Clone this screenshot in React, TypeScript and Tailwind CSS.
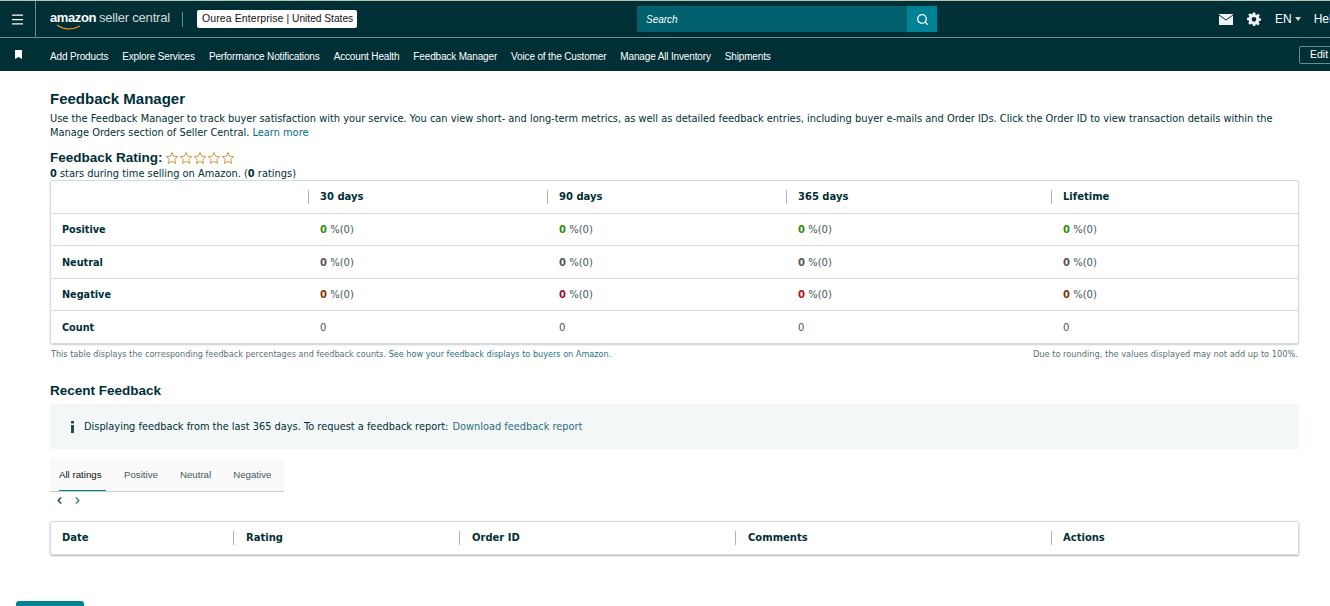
import { ChevronLeft, ChevronRight, Menu, Search } from "lucide-react"

const navLinks = [
  "Add Products",
  "Explore Services",
  "Performance Notifications",
  "Account Health",
  "Feedback Manager",
  "Voice of the Customer",
  "Manage All Inventory",
  "Shipments",
]

const rows = [
  { label: "Positive", h: "h-[32px]", colors: ["text-[#2f8f0f]", "text-[#2f8f0f]", "text-[#2f8f0f]", "text-[#2f8f0f]"] },
  { label: "Neutral", h: "h-[33px]", colors: ["text-[#555555]", "text-[#555555]", "text-[#555555]", "text-[#555555]"] },
  { label: "Negative", h: "h-[32px]", colors: ["text-[#7a3b0c]", "text-[#a01030]", "text-[#b01010]", "text-[#7a3b0c]"] },
]

const ratingCols = "grid grid-cols-[257px_239px_239px_265px_1fr]"
const recentCols = "grid grid-cols-[182px_226px_276px_316px_1fr]"

function Star() {
  return (
    <svg width="14" height="14" viewBox="0 0 24 24" fill="none" stroke="#c9973f" strokeWidth="1.7">
      <path d="M12 2.5l2.9 6.4 6.9.8-5.1 4.7 1.4 6.9-6.1-3.5-6.1 3.5 1.4-6.9-5.1-4.7 6.9-.8z" />
    </svg>
  )
}

function Head({ label, pad = "pl-[11px]" }: { label: string; pad?: string }) {
  return (
    <div className={`border-l border-[#aab7b8] ${pad} text-[10px] leading-[14px] font-bold text-[#002f36]`}>
      {label}
    </div>
  )
}

export default function App() {
  return (
    <div className="h-[606px] w-[1330px] overflow-hidden bg-white font-['DejaVu_Sans',sans-serif] text-[#002f36]">
      <header className="bg-[#002f36] font-['Liberation_Sans',sans-serif] text-white">
        <div className="flex h-[38px] items-center border-t border-b border-t-[#b5c4b0] border-b-[#6d8a8c]">
          <div className="flex h-full w-[36px] shrink-0 items-center justify-center border-r border-[#6d8a8c]">
            <Menu size={15} strokeWidth={2} />
          </div>
          <div className="relative ml-[14px] flex h-full w-[119px] shrink-0 items-center pb-[2px] text-[13px] whitespace-nowrap">
            <span className="font-bold tracking-[-0.4px]">amazon</span>
            <span className="ml-[3px] font-normal tracking-[-0.2px] text-[#d5dbdb]">seller central</span>
            <svg className="absolute top-[23px] left-[6px]" width="26" height="7" viewBox="0 0 26 7" fill="none">
              <path d="M1 1c7 5 16 5 23 1" stroke="#e88b1a" strokeWidth="1.4" />
            </svg>
          </div>
          <div className="ml-[13px] h-[15px] w-px shrink-0 bg-[#6d8a8c]" />
          <div className="ml-[14px] flex h-[18px] w-[160px] shrink-0 items-center rounded-[2px] bg-white px-[5px] text-[10.5px] whitespace-nowrap text-[#0f1111]">
            <span className="tracking-[0.1px]">Ourea Enterprise</span>
            <span className="ml-[3px] text-[10.2px]">| United States</span>
          </div>
          <div className="ml-[280px] flex h-[26px] w-[300px] shrink-0">
            <div className="flex flex-1 items-center bg-[#00606e] pl-[9px] text-[10px] italic">Search</div>
            <div className="flex w-[30px] items-center justify-center bg-[#008296]">
              <Search size={13} strokeWidth={2.4} />
            </div>
          </div>
          <div className="ml-[282px] flex shrink-0 items-center">
            <svg width="14" height="11" viewBox="0 0 14 11">
              <path d="M0 0h14v11H0z" fill="#eef2f2" />
              <path d="M0 1l7 5 7-5" fill="none" stroke="#002f36" strokeWidth="1" />
            </svg>
            <svg className="ml-[14px]" width="14" height="14" viewBox="0 0 24 24" fill="#eef2f2">
              <path fillRule="evenodd" d="M10 1h4l.6 3.2 1.9.8 2.7-1.8 2.8 2.8-1.8 2.7.8 1.9L24 11v4l-3.2.6-.8 1.9 1.8 2.7-2.8 2.8-2.7-1.8-1.9.8L14 24h-4l-.6-3.2-1.9-.8-2.7 1.8L2 19l1.8-2.7-.8-1.9L0 13.8V10l3.2-.6.8-1.9L2.2 4.8 5 2l2.7 1.8 1.9-.8zM12 8.5a4 4 0 100 8 4 4 0 000-8z" />
            </svg>
            <span className="ml-[14px] text-[12px]">EN</span>
            <span className="ml-[3px] h-0 w-0 border-x-[3.5px] border-t-[4px] border-x-transparent border-t-[#d5dbdb]" />
            <span className="ml-[13px] text-[12px]">Help</span>
          </div>
        </div>
        <div className="flex h-[33px] items-center">
          <div className="flex w-[36px] shrink-0 justify-center">
            <svg width="7" height="9" viewBox="0 0 7 9" fill="#ffffff">
              <path d="M0 0h7v9L3.5 7 0 9z" />
            </svg>
          </div>
          <nav className="mt-[3px] ml-[14px] flex shrink-0 gap-[14px] text-[10px] tracking-[-0.15px] whitespace-nowrap">
            {navLinks.map((link) => (
              <a key={link}>{link}</a>
            ))}
          </nav>
          <div className="mr-[-29px] ml-auto flex h-[18px] w-[60px] shrink-0 items-center rounded-[2px] border border-[#6d8a8c] pl-[10px] text-[10.5px]">
            Edit
          </div>
        </div>
      </header>

      <main className="pr-[31px] pl-[50px]">
        <h1 className="mt-[19px] font-['Liberation_Sans',sans-serif] text-[15px] leading-[17px] font-bold">Feedback Manager</h1>
        <p className="mt-[5px] text-[9.83px] leading-[14px]">
          Use the Feedback Manager to track buyer satisfaction with your service. You can view short- and long-term metrics, as well as detailed feedback entries, including buyer e-mails and Order IDs. Click the Order ID to view transaction details within the Manage Orders section of Seller Central.{" "}
          <a className="text-[#007185]">Learn more</a>
        </p>

        <div className="mt-[10px] flex h-[16px] items-center">
          <h2 className="font-['Liberation_Sans',sans-serif] text-[13.5px] font-bold">Feedback Rating:</h2>
          <div className="ml-[2px] flex">
            {[0, 1, 2, 3, 4].map((n) => (
              <Star key={n} />
            ))}
          </div>
        </div>
        <p className="mt-px mb-[-1px] text-[9.85px] leading-[14px]">
          <b>0</b> stars during time selling on Amazon. (<b>0</b> ratings)
        </p>

        <section className="w-[1249px] rounded-[2px] border border-[#d5dbdb] shadow-[0_1px_2px_rgba(0,0,0,0.2)]">
          <div className={`${ratingCols} h-[33px] items-center border-b border-[#d5dbdb]`}>
            <div />
            {["30 days", "90 days", "365 days", "Lifetime"].map((h) => (
              <Head key={h} label={h} />
            ))}
          </div>
          {rows.map((row) => (
            <div key={row.label} className={`${ratingCols} ${row.h} items-center border-b border-[#d5dbdb] text-[10px] leading-[15px]`}>
              <div className="pl-[11px] text-[9.7px] leading-[15px] font-bold">{row.label}</div>
              {row.colors.map((c, i) => (
                <div key={i} className="pl-[12px] text-[#43595c]">
                  <b className={c}>0</b> %(0)
                </div>
              ))}
            </div>
          ))}
          <div className={`${ratingCols} h-[32px] items-center text-[10px] leading-[15px]`}>
            <div className="pl-[11px] text-[9.7px] leading-[15px] font-bold">Count</div>
            {[0, 1, 2, 3].map((i) => (
              <div key={i} className="pl-[12px] text-[#43595c]">0</div>
            ))}
          </div>
        </section>

        <div className="mt-[4px] flex w-[1249px] justify-between px-px text-[8.15px] leading-[12px] text-[#5b7073]">
          <p>
            This table displays the corresponding feedback percentages and feedback counts. <a className="text-[#2d6f7d]">See how your feedback displays to buyers on Amazon.</a>
          </p>
          <p className="text-[8.25px]">Due to rounding, the values displayed may not add up to 100%.</p>
        </div>

        <h2 className="mt-[22px] font-['Liberation_Sans',sans-serif] text-[13.5px] leading-[17px] font-bold">Recent Feedback</h2>

        <div className="mt-[5px] flex h-[45px] w-[1249px] items-center bg-[#f3f7f7] pl-[21px] text-[9.82px]">
          <svg className="w-[13px] shrink-0" width="13" height="12" viewBox="0 0 13 12" fill="#2e4549">
            <path d="M0 0h3v2.5H0zM0 4h3v8H0z" />
          </svg>
          <span className="pt-px">Displaying feedback from the last 365 days. To request a feedback report:</span>
          <a className="ml-[4px] pt-px text-[#2d6f7d]">Download feedback report</a>
        </div>

        <div className="mt-[10px] flex h-[33px] w-[234px] border-b border-[#c8cccc] bg-[#fafafa] pt-px font-['Liberation_Sans',sans-serif] text-[9.7px] text-[#43595c]">
          <div className="ml-[9px] flex h-full w-[47px] items-center border-b border-[#008296] font-normal text-[#0f1111]">All ratings</div>
          <div className="ml-[18px] flex items-center">Positive</div>
          <div className="ml-[22px] flex items-center">Neutral</div>
          <div className="ml-[22px] flex items-center">Negative</div>
        </div>
        <div className="mt-[2px] ml-[4px] flex h-[12px] items-center gap-[7px]">
          <ChevronLeft size={11} strokeWidth={2.5} className="text-[#16333a]" />
          <ChevronRight size={11} strokeWidth={2.5} className="text-[#2d6f7d]" />
        </div>

        <section className="mt-[15px] w-[1249px] rounded-[2px] border border-[#d5dbdb] shadow-[0_1px_2px_rgba(0,0,0,0.3)]">
          <div className={`${recentCols} h-[32px] items-center`}>
            <div className="pl-[11px] text-[10px] leading-[14px] font-bold">Date</div>
            <Head label="Rating" pad="pl-[12px]" />
            <Head label="Order ID" pad="pl-[12px]" />
            <Head label="Comments" pad="pl-[12px]" />
            <Head label="Actions" />
          </div>
        </section>

        <div className="mt-[46px] ml-[-34px] h-[20px] w-[68px] rounded-[3px] bg-[#008296]" />
      </main>
    </div>
  )
}
